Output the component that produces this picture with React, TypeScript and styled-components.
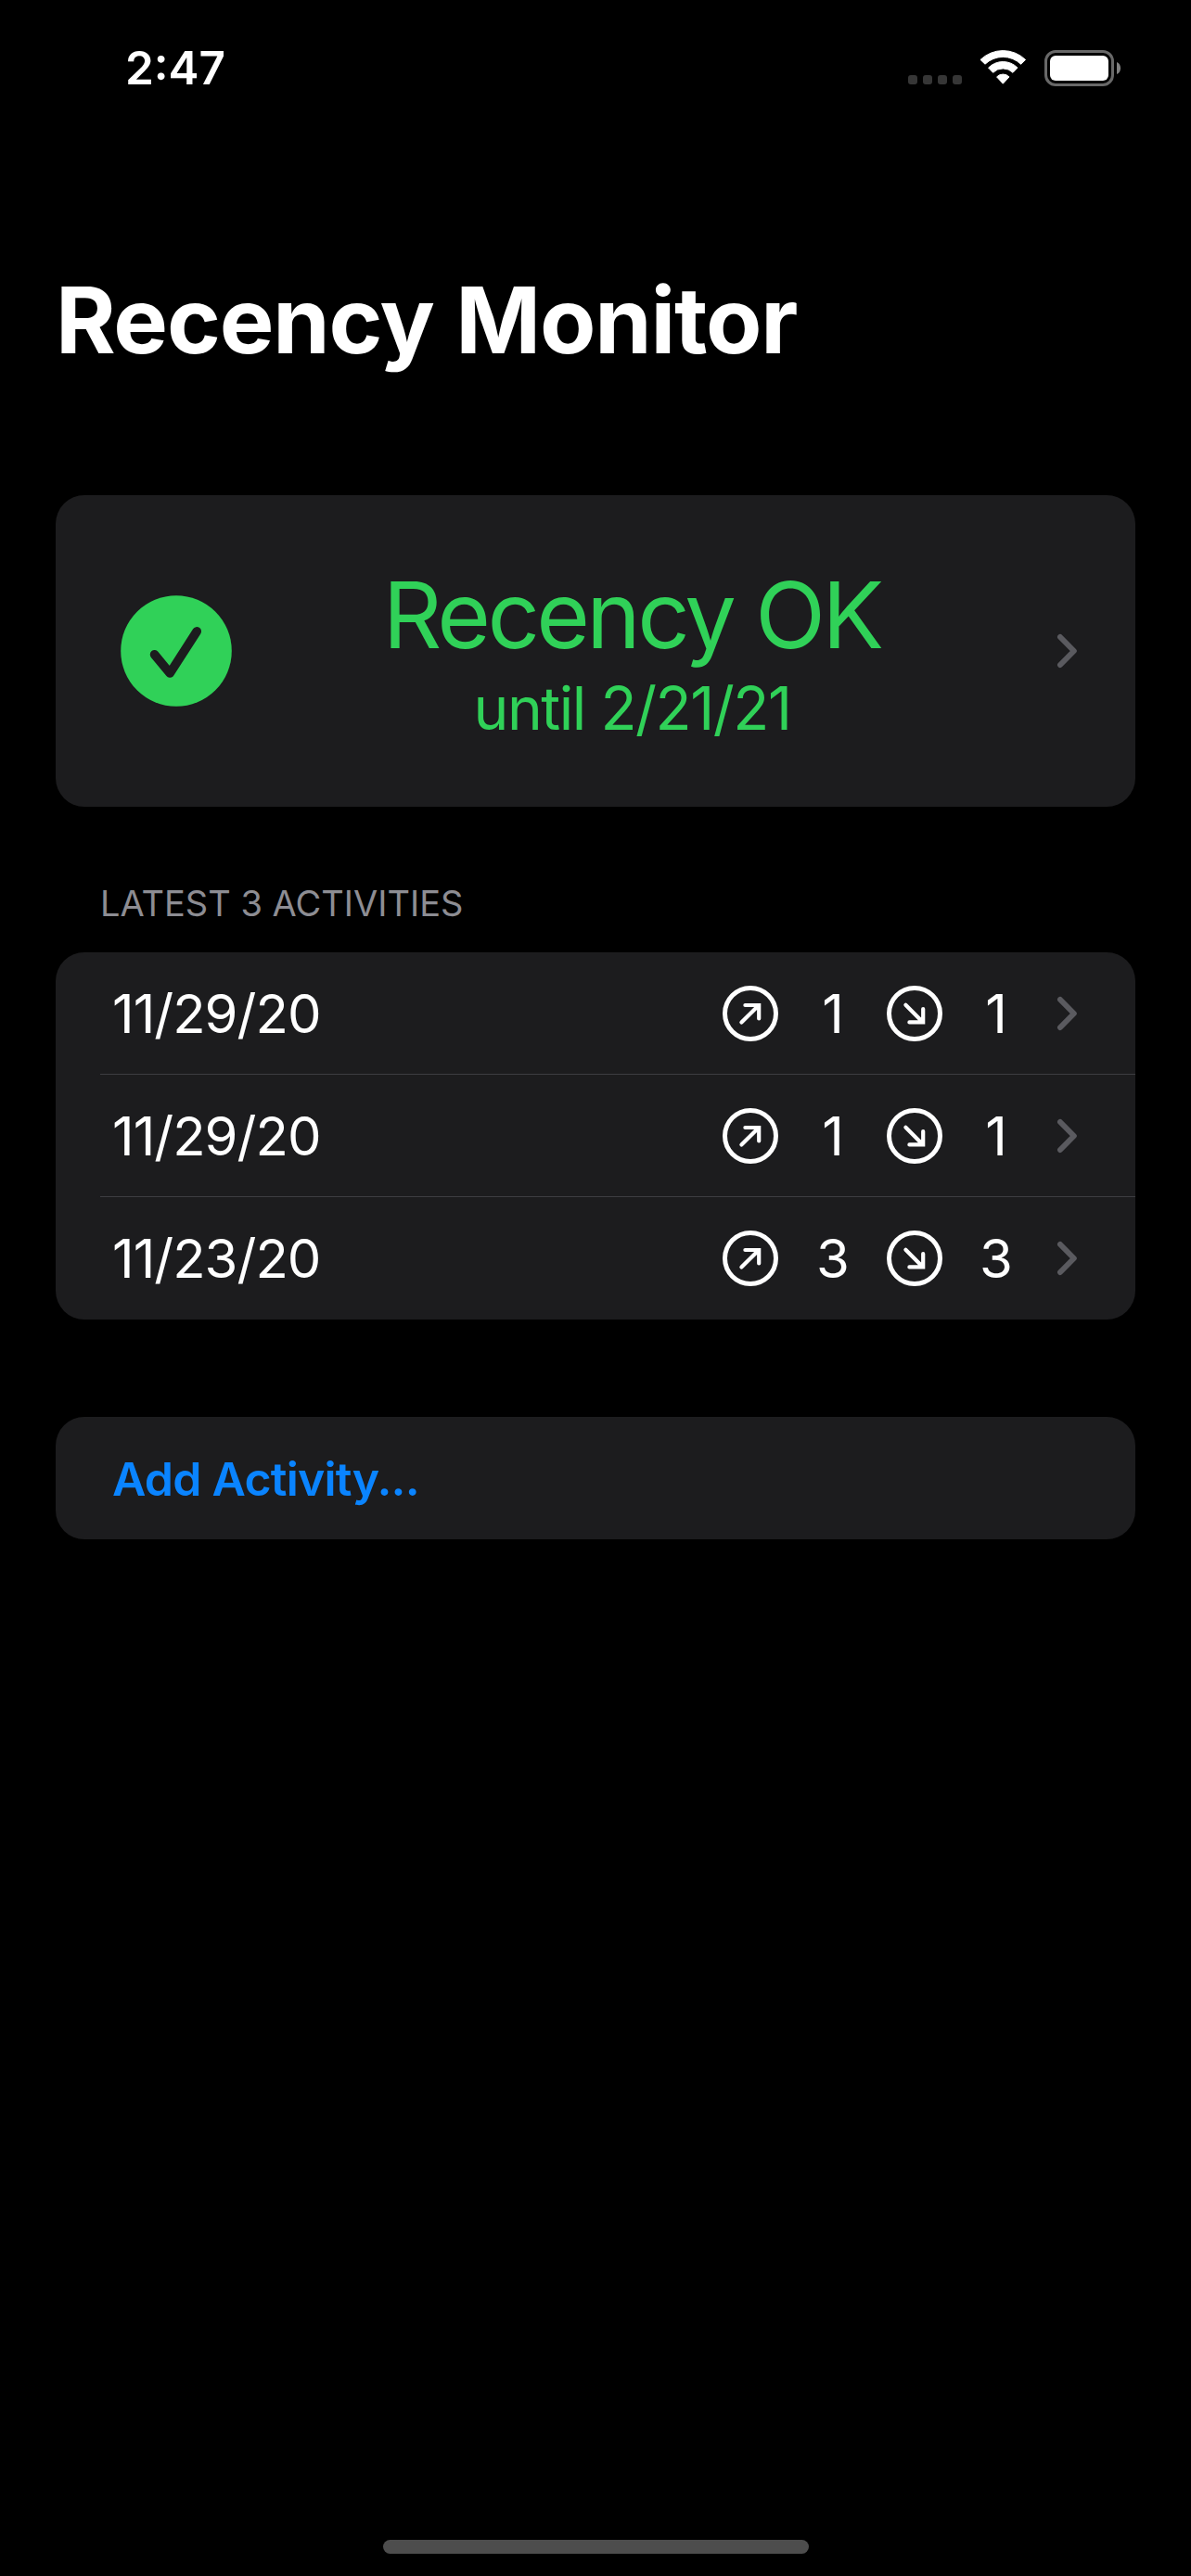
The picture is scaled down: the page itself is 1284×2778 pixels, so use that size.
import styled, { createGlobalStyle } from "styled-components";

const GlobalStyle = createGlobalStyle`
  * {
    box-sizing: border-box;
  }
  body {
    margin: 0;
    background: #000;
    color: #fff;
    font-family: Inter, "Liberation Sans", sans-serif;
  }
`;

const Screen = styled.main`
  display: flex;
  flex-direction: column;
  width: 1284px;
  height: 2778px;
  padding: 0 60px;
  background: #000;
`;

const StatusBar = styled.header`
  display: flex;
  align-items: center;
  justify-content: space-between;
  height: 146px;
  padding: 0 15px 0 75px;
`;

const Clock = styled.span`
  font-size: 49.5px;
  font-weight: 600;
  line-height: 60px;
`;

const StatusIcons = styled.div`
  display: flex;
  align-items: center;
`;

const SignalDots = styled.div`
  display: flex;
  gap: 6px;
  margin: 26px 19px 0 0;
`;

const SignalDot = styled.span`
  width: 10px;
  height: 10px;
  border-radius: 3px;
  background: #363636;
`;

const WifiGlyph = styled.svg`
  display: block;
  width: 51px;
  height: 38px;
  margin-right: 19px;
`;

const Battery = styled.div`
  display: flex;
  align-items: center;
  gap: 3px;
`;

const BatteryShell = styled.div`
  width: 75px;
  height: 39px;
  padding: 3px;
  border: 3px solid #686868;
  border-radius: 12px;
`;

const BatteryLevel = styled.div`
  height: 100%;
  border-radius: 6px;
  background: #fff;
`;

const BatteryNub = styled.svg`
  display: block;
  width: 5px;
  height: 13px;
`;

const Title = styled.h1`
  margin: 138px 0 128px;
  font-size: 98.6px;
  font-weight: 700;
  line-height: 122px;
  letter-spacing: -1.19px;
  word-spacing: 1.5px;
`;

const Card = styled.section`
  overflow: hidden;
  border-radius: 31px;
  background: #1c1c1e;
`;

const SummaryCard = styled(Card)`
  display: flex;
  align-items: center;
  height: 336px;
  padding: 0 62px 0 70px;
`;

const CheckBadge = styled.svg`
  display: block;
  flex: none;
  width: 120px;
  height: 120px;
`;

const Summary = styled.div`
  display: flex;
  flex: 1;
  flex-direction: column;
  align-items: center;
  padding: 3px 26px 0 0;
  color: #30d158;
  white-space: nowrap;
`;

const SummaryStatus = styled.span`
  font-size: 99px;
  line-height: 120px;
  letter-spacing: -3.65px;
`;

const SummaryUntil = styled.span`
  padding-left: 1px;
  font-size: 64px;
  line-height: 81px;
  letter-spacing: -1.45px;
`;

const ChevronGlyph = styled.svg`
  display: block;
  flex: none;
  width: 24px;
  height: 42px;
`;

const SectionLabel = styled.h2`
  margin: 80px 0 28px 48px;
  color: #8d8d93;
  font-size: 38px;
  font-weight: 400;
  line-height: 49px;
`;

const ActivityList = styled(Card)`
  display: flex;
  flex-direction: column;
  padding-left: 48px;
`;

const ActivityRow = styled.div`
  display: flex;
  align-items: center;
  height: 132px;
  padding: 0 62px 0 13px;
  box-shadow: inset 0 -1px 0 #3d3d41;
  font-size: 58px;

  &:last-child {
    box-shadow: none;
  }
`;

const ActivityDate = styled.span`
  flex: 1;
  letter-spacing: -0.96px;
`;

const ArrowBadge = styled.svg`
  display: block;
  width: 60px;
  height: 60px;
`;

const Count = styled.span<{ $width: number }>`
  width: ${({ $width }) => $width}px;
  padding-left: 1px;
  text-align: center;
`;

const RowChevron = styled.div`
  margin-left: 7px;
`;

const AddButton = styled.button`
  display: flex;
  align-items: center;
  height: 132px;
  margin-top: 105px;
  padding: 1px 61px 0;
  border: 0;
  border-radius: 31px;
  background: #1c1c1e;
  color: #0a84ff;
  font-family: inherit;
  font-size: 50px;
  font-weight: 600;
  letter-spacing: -0.77px;
`;

const HomeIndicator = styled.div`
  align-self: center;
  width: 459px;
  height: 15px;
  margin: auto 0 24px;
  border-radius: 8px;
  background: #4d4d4d;
`;

function Wifi() {
  return (
    <WifiGlyph viewBox="0 0 51 38" fill="#fff" stroke="#fff" strokeWidth="1" strokeLinejoin="round">
      <path d="M1 10.4A35 35 0 0 1 49.6 10.4L44.6 15.2A27.8 27.8 0 0 0 6 15.2Z" />
      <path d="M9.6 19.1A22 22 0 0 1 41 19.1L36 24.3A15.2 15.2 0 0 0 14.6 24.3Z" />
      <path d="M18.6 28.9A9.3 9.3 0 0 1 32 28.9L25.3 36.2Z" />
    </WifiGlyph>
  );
}

function Chevron() {
  return (
    <ChevronGlyph viewBox="0 0 24 42" fill="none" stroke="#5a5a5f" strokeWidth="6" strokeLinecap="round" strokeLinejoin="round">
      <path d="M5 6L19.8 21L5 36" />
    </ChevronGlyph>
  );
}

function Check() {
  return (
    <CheckBadge viewBox="0 0 120 120">
      <circle cx="60" cy="60" r="59.8" fill="#30d158" />
      <path
        d="M36.6 63.8L53.2 84L82.2 38.9"
        fill="none"
        stroke="#1c1c1e"
        strokeWidth="9.7"
        strokeLinecap="round"
        strokeLinejoin="round"
      />
    </CheckBadge>
  );
}

function Arrow({ direction }: { direction: "up" | "down" }) {
  return (
    <ArrowBadge viewBox="0 0 60 60" fill="none" stroke="#fff" strokeLinecap="round">
      <circle cx="30" cy="30" r="27.5" strokeWidth="5" />
      {direction === "up" ? (
        <path d="M20.4 39.6L38.6 21.4M24.4 21H39.2V35.4" strokeWidth="4.2" />
      ) : (
        <path d="M20.4 20.8L38.6 39M24.4 39.4H39.2V25" strokeWidth="4.2" />
      )}
    </ArrowBadge>
  );
}

const activities = [
  { date: "11/29/20", takeoffs: 1, landings: 1 },
  { date: "11/29/20", takeoffs: 1, landings: 1 },
  { date: "11/23/20", takeoffs: 3, landings: 3 },
];

export default function App() {
  return (
    <>
      <GlobalStyle />
      <Screen>
        <StatusBar>
          <Clock>2:47</Clock>
          <StatusIcons>
            <SignalDots>
              <SignalDot />
              <SignalDot />
              <SignalDot />
              <SignalDot />
            </SignalDots>
            <Wifi />
            <Battery>
              <BatteryShell>
                <BatteryLevel />
              </BatteryShell>
              <BatteryNub viewBox="0 0 5 13">
                <path d="M0 0C5.4 2 5.4 11 0 13Z" fill="#808080" />
              </BatteryNub>
            </Battery>
          </StatusIcons>
        </StatusBar>

        <Title>Recency Monitor</Title>

        <SummaryCard>
          <Check />
          <Summary>
            <SummaryStatus>Recency OK</SummaryStatus>
            <SummaryUntil>until 2/21/21</SummaryUntil>
          </Summary>
          <Chevron />
        </SummaryCard>

        <SectionLabel>LATEST 3 ACTIVITIES</SectionLabel>

        <ActivityList>
          {activities.map((activity, index) => (
            <ActivityRow key={index}>
              <ActivityDate>{activity.date}</ActivityDate>
              <Arrow direction="up" />
              <Count $width={117}>{activity.takeoffs}</Count>
              <Arrow direction="down" />
              <Count $width={115}>{activity.landings}</Count>
              <RowChevron>
                <Chevron />
              </RowChevron>
            </ActivityRow>
          ))}
        </ActivityList>

        <AddButton>Add Activity...</AddButton>

        <HomeIndicator />
      </Screen>
    </>
  );
}
